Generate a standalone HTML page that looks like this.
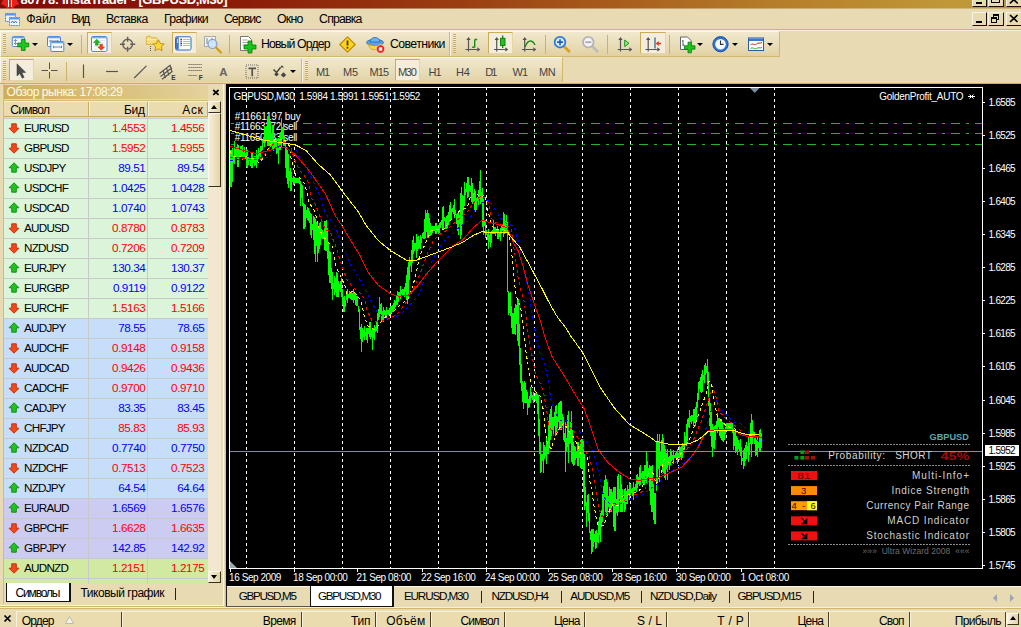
<!DOCTYPE html><html><head><meta charset="utf-8"><title>InstaTrader</title><style>*{box-sizing:border-box;margin:0;padding:0}
html,body{width:1021px;height:627px;overflow:hidden;background:#e8dab2;font-family:"Liberation Sans","DejaVu Sans",sans-serif;font-size:12px;color:#000}
.a{position:absolute}
.t{position:absolute;white-space:nowrap;line-height:14px}
#title{left:0;top:0;width:1021px;height:9px;background:linear-gradient(90deg,#830a04 0,#8a1606 20%,#9a3e12 45%,#a85c1c 60%,#b47a28 74%,#c09838 93%,#bc983a 100%);overflow:hidden}
.tb{position:absolute;background:linear-gradient(#f1e8cd,#e9ddb8 55%,#e1d0a2);border-bottom:1px solid #d3b86c;border-top:1px solid #fbf7ea;border-left:1px solid #fbf7ea}
.grip{position:absolute;width:3px;background:repeating-linear-gradient(#c9a84e 0,#c9a84e 1px,rgba(255,255,255,.35) 1px,rgba(255,255,255,.35) 2px)}
.sep{position:absolute;width:1px;background:#cdb06a}
.pressed{position:absolute;background:#f4eddb;border:1px solid #e6d5a4;border-top-color:#cbab58;border-left-color:#cbab58}
.dd{position:absolute;width:0;height:0;border-left:3px solid transparent;border-right:3px solid transparent;border-top:3px solid #000}
.row{position:absolute;left:4px;width:204px;height:20px;border-bottom:1px solid #c9c9c9}
.row i{position:absolute;left:84px;top:0;width:1px;height:19px;background:#c9c9c9}
.row i+i{left:143px}
</style></head><body>
<div id="title" class="a"><svg class="a" style="left:1px;top:0" width="18" height="9" viewBox="0 0 18 9"><path d="M2 0h14l2 4-4 2-3 3-2-2-2 2-3-3-4-2z" fill="#e8201a"/><path d="M7 0h1v7h-1zM10 0h1v7h-1z" fill="#fff"/></svg>
<span class="t" style="left:20.50px;top:-7.00px;font-size:13px;letter-spacing:-0.372px;color:#fff;font-weight:bold;">80778: InstaTrader - [GBPUSD,M30]</span>
<div class="a" style="left:0;top:8px;width:1021px;height:1px;background:rgba(236,225,194,.45)"></div>
<div class="a" style="left:972.0px;top:-8px;width:15.0px;height:15px;background:#e8dab2;border:1px solid #f8f3e2;border-right:1.500px solid #1a1408;border-bottom:1.500px solid #1a1408"></div>
<div class="a" style="left:987.5px;top:-8px;width:16.0px;height:15px;background:#e8dab2;border:1px solid #f8f3e2;border-right:1.500px solid #1a1408;border-bottom:1.500px solid #1a1408"></div>
<div class="a" style="left:1006.0px;top:-8px;width:16.0px;height:15px;background:#e8dab2;border:1px solid #f8f3e2;border-right:1.500px solid #1a1408;border-bottom:1.500px solid #1a1408"></div>
<div class="a" style="left:976px;top:2px;width:6px;height:2px;background:#000"></div>
<div class="a" style="left:991px;top:-5px;width:9px;height:8px;border:1px solid #000;border-top-width:2px"></div>
<svg class="a" style="left:1009px;top:0" width="10" height="5"><path d="M.800 -4l8 7.500M8.800 -4l-8 7.500" stroke="#000" stroke-width="1.700"/></svg>
</div>
<svg class="a" style="left:4px;top:12px" width="16" height="15" viewBox="0 0 16 15"><rect x="1.500" y="1.500" width="10" height="8" fill="#e8f2ff" stroke="#3a78d8" stroke-dasharray="1 .6"/><rect x="1.500" y="1.500" width="10" height="2" fill="#5a96ea"/><rect x="5.500" y="5.500" width="10" height="8" fill="#f4f9ff" stroke="#3a78d8" stroke-dasharray="1 .6"/><rect x="5.500" y="5.500" width="10" height="2" fill="#5a96ea"/><path d="M7 11l1.500-2 1.500 2 1.500-2 1.500 2" stroke="#2a62c8" fill="none" stroke-width=".9"/></svg>
<span class="t" style="left:26.20px;top:11.54px;font-size:12.3px;letter-spacing:-0.211px;">Файл</span>
<span class="t" style="left:71.20px;top:11.54px;font-size:12.3px;letter-spacing:-1.675px;">Вид</span>
<span class="t" style="left:105.90px;top:11.54px;font-size:12.3px;letter-spacing:-0.553px;">Вставка</span>
<span class="t" style="left:164.10px;top:11.54px;font-size:12.3px;letter-spacing:-0.715px;">Графики</span>
<span class="t" style="left:223.90px;top:11.54px;font-size:12.3px;letter-spacing:-0.902px;">Сервис</span>
<span class="t" style="left:277.10px;top:11.54px;font-size:12.3px;letter-spacing:-0.793px;">Окно</span>
<span class="t" style="left:319.10px;top:11.54px;font-size:12.3px;letter-spacing:-0.825px;">Справка</span>
<div class="a" style="left:972.0px;top:12px;width:15.0px;height:14px;background:#e8dab2;border:1px solid #f8f3e2;border-right:1.500px solid #1a1408;border-bottom:1.500px solid #1a1408"></div>
<div class="a" style="left:987.5px;top:12px;width:16.0px;height:14px;background:#e8dab2;border:1px solid #f8f3e2;border-right:1.500px solid #1a1408;border-bottom:1.500px solid #1a1408"></div>
<div class="a" style="left:1006.0px;top:12px;width:16.0px;height:14px;background:#e8dab2;border:1px solid #f8f3e2;border-right:1.500px solid #1a1408;border-bottom:1.500px solid #1a1408"></div>
<div class="a" style="left:976px;top:21px;width:6px;height:2px;background:#000"></div>
<div class="a" style="left:993px;top:14px;width:6px;height:6px;border:1px solid #000;border-top-width:2px"></div><div class="a" style="left:991px;top:17px;width:6px;height:6px;border:1px solid #000;border-top-width:2px;background:#e8dab2"></div>
<svg class="a" style="left:1009px;top:14px" width="10" height="9"><path d="M1 1l7.500 7M8.500 1l-7.500 7" stroke="#000" stroke-width="1.700"/></svg>
<div class="a" style="left:0;top:29px;width:1021px;height:1px;background:#d3b665"></div><div class="a" style="left:0;top:30px;width:1021px;height:1px;background:#f7f0dc"></div>
<div class="tb" style="left:0;top:31px;width:780px;height:26px;border-right:1px solid #d3b86c"></div>
<div class="tb" style="left:0;top:57px;width:563px;height:27px;border-right:1px solid #d3b86c"></div>
<div class="a" style="left:449px;top:32px;width:1px;height:24px;background:#d3b86c"></div><div class="a" style="left:450px;top:32px;width:1px;height:24px;background:#faf4e4"></div>
<div class="a" style="left:301px;top:59px;width:1px;height:24px;background:#d3b86c"></div><div class="a" style="left:302px;top:59px;width:1px;height:24px;background:#faf4e4"></div>
<div class="grip" style="left:3px;top:34px;height:19px"></div>
<div class="grip" style="left:453px;top:34px;height:19px"></div>
<div class="grip" style="left:3px;top:61px;height:19px"></div>
<div class="grip" style="left:305px;top:61px;height:19px"></div>
<div class="sep" style="left:81px;top:35px;height:19px"></div>
<div class="sep" style="left:229px;top:35px;height:19px"></div>
<div class="sep" style="left:545px;top:35px;height:19px"></div>
<div class="sep" style="left:607px;top:35px;height:19px"></div>
<div class="sep" style="left:669px;top:35px;height:19px"></div>
<div class="sep" style="left:66px;top:62px;height:19px"></div>
<div class="pressed" style="left:87px;top:32px;width:25px;height:22px"></div>
<div class="pressed" style="left:172px;top:32px;width:25px;height:22px"></div>
<div class="pressed" style="left:488px;top:32px;width:25px;height:22px"></div>
<div class="pressed" style="left:640px;top:32px;width:26px;height:22px"></div>
<div class="pressed" style="left:9px;top:59px;width:25px;height:22px"></div>
<div class="pressed" style="left:395px;top:59px;width:25px;height:22px"></div>
<div class="dd" style="left:32px;top:43px"></div>
<div class="dd" style="left:67px;top:43px"></div>
<div class="dd" style="left:697px;top:43px"></div>
<div class="dd" style="left:732px;top:43px"></div>
<div class="dd" style="left:767px;top:43px"></div>
<div class="dd" style="left:290px;top:70px"></div>
<svg class="a" style="left:8px;top:33px" width="60" height="22" viewBox="8 33 60 22"><rect x="12.3" y="36.5" width="12" height="10" rx="1" fill="#f6faff" stroke="#4a86d8" stroke-width="1"/><path d="M12.8 37.5h11" stroke="#6aa2ea" stroke-width="1.600"/><path d="M15.500 39.500v5M14 41l1.500-1.500 1.500 1.500M14 43l1.500 1.500 1.500-1.500" stroke="#5a7a9a" stroke-width=".8" fill="none"/><path d="M21.400 39.400h3.700v3.700h3.700v3.700h-3.700v3.700h-3.700v-3.700h-3.700v-3.700h3.700z" fill="#1fc81f" stroke="#0a7a0a" stroke-width=".8"/><rect x="47.5" y="36.5" width="13" height="10" rx="1" fill="#f6faff" stroke="#4a86d8" stroke-width="1"/><path d="M48.0 37.5h12" stroke="#6aa2ea" stroke-width="1.600"/><rect x="50.8" y="41.5" width="13" height="10" rx="1" fill="#f6faff" stroke="#4a86d8" stroke-width="1"/><path d="M51.3 42.5h12" stroke="#6aa2ea" stroke-width="1.600"/><path d="M50 41h8M50 39.800v2.400M58 39.800v2.400M53.500 47h8M53.500 45.800v2.400M61.500 45.800v2.400" stroke="#5a7a9a" stroke-width=".9" fill="none"/></svg>
<svg class="a" style="left:91px;top:36px" width="17" height="16" viewBox="0 0 17 16"><rect x=".5" y=".5" width="15.500" height="15" rx="1.500" fill="#fff" stroke="#4a8ad8"/><path d="M1 1.700h14.500" stroke="#7ab0ee" stroke-width="1.400"/><path d="M9 4.500h5M9 7h5M3 10.500h4M3 13h4" stroke="#d8e2ee" stroke-width=".8"/><path d="M5.800 3.200l3.400 3.400h-2v2.600h-2.800v-2.600h-2z" fill="#1cb81c" stroke="#0c8a0c" stroke-width=".5"/><path d="M10.200 14.300l3.400-3.400h-2v-2.600h-2.800v2.600h-2z" fill="#f0451c" stroke="#c02a08" stroke-width=".5"/></svg>
<svg class="a" style="left:118px;top:34px" width="20" height="20" viewBox="118 34 20 20"><circle cx="127.600" cy="44.200" r="4.900" fill="none" stroke="#606060" stroke-width="1.400"/><path d="M127.600 36.700v5M127.600 46.700v5M120 44.200h5M130.200 44.200h5" stroke="#606060" stroke-width="1.400"/></svg>
<svg class="a" style="left:144px;top:34px" width="22" height="20" viewBox="144 34 22 20"><path d="M146.300 37.300q0-1 1-1h3.200l1.200 1.500h4.300q1 0 1 1v5.700h-10.700z" fill="#f6dc7a" stroke="#d4aa3a" stroke-width=".8"/><path d="M146.800 39.500h9.700" stroke="#fbefb4" stroke-width="1"/><path d="M150.500 46v6" stroke="#555" stroke-width="1" stroke-dasharray="1 1" shape-rendering="crispEdges"/><path d="M158.500 39.800l1.750 3.700 4 .5-2.950 2.750.8 4-3.600-2-3.600 2 .8-4-2.950-2.750 4-.5z" fill="#ffd93a" stroke="#b98a10" stroke-width=".9" stroke-linejoin="round"/></svg>
<svg class="a" style="left:175px;top:36px" width="17" height="15" viewBox="0 0 17 15"><rect x=".5" y=".800" width="15.500" height="13.200" rx="1.500" fill="#fff" stroke="#2f66c0"/><rect x="1" y="1.300" width="2.800" height="12.200" fill="#3a78d8"/><path d="M2.600 3v4" stroke="#fff" stroke-width=".8"/><path d="M5.500 3.500h1.300M5.500 7.500h1.300" stroke="#111" stroke-width="1.300"/><path d="M5.500 5.500h1.300M5.500 9.500h1.300" stroke="#e01a1a" stroke-width="1.300"/><path d="M8 3.500h7M8 5.500h7M8 7.500h7M8 9.500h7" stroke="#9ab4e8" stroke-width=".9"/></svg>
<svg class="a" style="left:203px;top:35px" width="20" height="20" viewBox="0 0 20 20"><rect x="1.500" y="1.500" width="11" height="10" fill="#f3f3f3" stroke="#aaa"/><path d="M4 3v6M9 3v6" stroke="#567" stroke-width=".8"/><circle cx="9.500" cy="9" r="4.500" fill="#cfe4fb" fill-opacity=".85" stroke="#7a9cc8" stroke-width="1.200"/><path d="M13 12.500l5 5" stroke="#d89a1a" stroke-width="2.400" stroke-linecap="round"/></svg>
<svg class="a" style="left:239px;top:35px" width="18" height="19" viewBox="0 0 18 19"><path d="M1.500 1.500h8l3 3v11h-11z" fill="#fff" stroke="#777"/><path d="M3.500 5h5M3.500 7.500h6M3.500 10h6" stroke="#999" stroke-width=".9"/><path d="M9 6h4v4h4v4h-4v4h-4v-4h-4v-4h4z" fill="#19c419" stroke="#0a7a0a" stroke-width=".8"/></svg>
<span class="t" style="left:261.00px;top:36.74px;font-size:12.3px;letter-spacing:-0.886px;">Новый Ордер</span>
<svg class="a" style="left:339px;top:36px" width="17" height="17" viewBox="0 0 17 17"><path d="M8.500 .800l7.700 7.700-7.700 7.700-7.700-7.700z" fill="#ffd21c" stroke="#b88a08" stroke-width="1.100" stroke-linejoin="round"/><path d="M8.500 4.500v5" stroke="#4a3a00" stroke-width="1.800"/><rect x="7.600" y="10.800" width="1.800" height="1.800" fill="#4a3a00"/></svg>
<svg class="a" style="left:366px;top:35px" width="20" height="19" viewBox="0 0 20 19"><ellipse cx="9" cy="7.500" rx="8.500" ry="3.200" fill="#5aa0e2" stroke="#2a68b4" stroke-width=".8"/><path d="M4 7c0-6 10-6 10 0z" fill="#6cb0ee" stroke="#2a68b4" stroke-width=".8"/><path d="M2.500 9.500c1 7 11.500 7 13 0c-4 1.800-9 1.800-13 0z" fill="#ffd84a" stroke="#c79a1a" stroke-width=".8"/><circle cx="14.500" cy="14" r="4.300" fill="#e8261a" stroke="#fff" stroke-width=".6"/><rect x="12.800" y="12.300" width="3.400" height="3.400" fill="#fff"/></svg>
<span class="t" style="left:389.90px;top:36.74px;font-size:12.3px;letter-spacing:-0.562px;">Советники</span>
<svg class="a" style="left:460px;top:30px" width="320" height="27" viewBox="460 30 320 27"><path d="M468.5 38.5V51.5M465.5 49.5H478.5" stroke="#555" stroke-width="1.2" fill="none"/><path d="M468.5 37.0l-2.2 3h4.4zM480.3 49.5l-3-2.2v4.4z" fill="#555"/><path d="M474.7 39.5V47.2M472.2 47.2h2.5M474.7 39.5h2.500" stroke="#1a8a1a" stroke-width="1.4" fill="none"/><path d="M496.7 38.5V51.5M494 49.5H506.5" stroke="#555" stroke-width="1.2" fill="none"/><path d="M496.7 37.0l-2.2 3h4.4zM508.3 49.5l-3-2.2v4.4z" fill="#555"/><path d="M502.7 35.5V48" stroke="#0c6a0c" stroke-width="1.2"/><rect x="500.5" y="38.3" width="4.500" height="7.200" fill="#22c022" stroke="#0c7a0c" stroke-width=".9"/><path d="M524.7 38.5V51.5M522 49.5H534.5" stroke="#555" stroke-width="1.2" fill="none"/><path d="M524.7 37.0l-2.2 3h4.4zM536.3 49.5l-3-2.2v4.4z" fill="#555"/><path d="M525 47c1.500-4 3.500-6 5.500-6s3.500 2 4.500 4" stroke="#1a8a1a" stroke-width="1.300" fill="none"/><path d="M563.5 46l5.500 5.300" stroke="#d9a01e" stroke-width="2.800" stroke-linecap="round"/><circle cx="560" cy="42.200" r="5.300" fill="#dceeff" stroke="#2f7ad8" stroke-width="1.800"/><path d="M557 42.200h6M560 39.200v6" stroke="#1d5fc0" stroke-width="1.700"/><path d="M591.800 46l5.500 5.300" stroke="#bdbdbd" stroke-width="2.800" stroke-linecap="round"/><circle cx="588.300" cy="42.200" r="5.300" fill="#f2f2f2" stroke="#b4b4b4" stroke-width="1.800"/><path d="M585.300 42.200h6" stroke="#a8a8a8" stroke-width="1.700"/><path d="M620.5 38.5V51.5M617.7 49.5H630.5" stroke="#555" stroke-width="1.2" fill="none"/><path d="M620.5 37.0l-2.2 3h4.4zM632.3 49.5l-3-2.2v4.4z" fill="#555"/><path d="M624.700 40l4.300 3.300-4.300 3.300z" fill="#8ee88e" stroke="#1a9a1a" stroke-width="1"/><path d="M648.2 38.5V51.5M645.5 49.5H658.5" stroke="#555" stroke-width="1.2" fill="none"/><path d="M648.2 37.0l-2.2 3h4.4zM660.3 49.5l-3-2.2v4.4z" fill="#555"/><path d="M655 37.500V48.500" stroke="#2a6a9a" stroke-width="1.300"/><path d="M661 43.500h-4.500" stroke="#e8321a" stroke-width="1.300"/><path d="M655.800 43.500l3-2.500v5z" fill="#e8321a"/><path d="M680.500 37h7l3.500 3.500v9h-10.500z" fill="#fff" stroke="#666" stroke-width="1"/><path d="M683 40v6M682 41h1M683 45h1.500" stroke="#456" stroke-width=".9" fill="none"/><path d="M688 42.200h3.400v3.600h3.600v3.400h-3.600v3.600h-3.400v-3.600h-3.600v-3.400h3.600z" fill="#1fc41f" stroke="#0a7a0a" stroke-width=".8"/><circle cx="720.500" cy="44.200" r="7.600" fill="#2f74d4" stroke="#1a4e9e" stroke-width="1"/><circle cx="720.500" cy="44.200" r="5.300" fill="#f4f8ff"/><path d="M720.500 40.500v3.900h3" stroke="#333" stroke-width="1.100" fill="none"/><rect x="748.500" y="38" width="15" height="12.500" fill="#fff" stroke="#2a5aa8"/><rect x="749" y="38.500" width="14" height="2.500" fill="#3a78d8"/><path d="M750.500 45c2.500-2.500 4 1 6-1s3 0 5.500-1.500" stroke="#c22" fill="none"/><path d="M750.500 48.500c2.500-2 4 1.500 6 0s3 0 5.500-1" stroke="#2a2" fill="none"/></svg>
<svg class="a" style="left:0;top:58px" width="300" height="26" viewBox="0 58 300 26"><path d="M17 63.800v12.200l2.900-2.600 2.300 4.800 1.900-.9-2.300-4.700 3.900-.2z" fill="#4a4a4a" stroke="#333" stroke-width=".5"/><path d="M49.500 62.500v6.500M49.500 72v6.500M41.500 70.500h6.500M51 70.500h6.500" stroke="#555" stroke-width="1"/><path d="M83.500 64.500V78" stroke="#555" stroke-width="1.200"/><path d="M106 71.500H118" stroke="#555" stroke-width="1.200"/><path d="M134.200 78L146.400 65.800" stroke="#555" stroke-width="1.200"/><path d="M159.500 73.500l11-8.500M160.500 76.500l11.500-8.800M162 79.300l10.500-8M163 70.500l2.500 7.500M166.500 67.800l2.500 7.500M170 65l2 7" stroke="#505050" stroke-width="1.100" fill="none"/><text x="171.200" y="79.600" font-size="6.500" font-weight="bold" fill="#333" font-family="Liberation Sans,sans-serif">E</text><path d="M188.600 64.500H202M188.600 67.500H202M188.600 70.500H202M188.600 75.500H197" stroke="#444" stroke-width="1.200" stroke-dasharray="1 1"/><text x="198.800" y="79.600" font-size="6.500" font-weight="bold" fill="#333" font-family="Liberation Sans,sans-serif">F</text><text x="219.300" y="75.600" font-size="11.500" font-weight="bold" fill="#666" font-family="Liberation Sans,sans-serif">A</text><rect x="246" y="65" width="12" height="13" fill="none" stroke="#666" stroke-dasharray="1 1"/><path d="M248.500 68.300h7.500M252.200 68.300v8" stroke="#555" stroke-width="1.700"/><path d="M273.500 69.500l3 3 4-5" stroke="#444" stroke-width="1.500" fill="none"/><path d="M276.500 72l2.300 2.300-2.300 2.300-2.300-2.300zM283.500 72.200l2.700 2.700-2.700 2.700-2.700-2.700z" fill="#444"/><path d="M280 67.500l2-2.200 2 2.200z" fill="#444"/></svg>
<span class="t" style="left:315.90px;top:64.69px;font-size:11px;letter-spacing:-1.081px;color:#444;">M1</span>
<span class="t" style="left:343.10px;top:64.69px;font-size:11px;letter-spacing:-0.181px;color:#444;">M5</span>
<span class="t" style="left:369.50px;top:64.69px;font-size:11px;letter-spacing:-0.903px;color:#444;">M15</span>
<span class="t" style="left:397.90px;top:64.69px;font-size:11px;letter-spacing:-1.203px;color:#444;">M30</span>
<span class="t" style="left:428.50px;top:64.69px;font-size:11px;letter-spacing:-1.062px;color:#444;">H1</span>
<span class="t" style="left:456.10px;top:64.69px;font-size:11px;letter-spacing:-0.363px;color:#444;">H4</span>
<span class="t" style="left:485.20px;top:64.69px;font-size:11px;letter-spacing:-1.762px;color:#444;">D1</span>
<span class="t" style="left:512.50px;top:64.69px;font-size:11px;letter-spacing:-1.000px;color:#444;">W1</span>
<span class="t" style="left:538.90px;top:64.69px;font-size:11px;letter-spacing:-0.309px;color:#444;">MN</span>
<div class="a" style="left:0;top:83px;width:226px;height:1px;background:#d8c080"></div>
<div class="a" style="left:3px;top:84px;width:1px;height:520px;background:#d6bb72"></div>
<div class="a" style="left:4px;top:85px;width:204px;height:14px;background:linear-gradient(90deg,#ceae5c,#dbc483 65%,#e4d29e)"></div>
<span class="t" style="left:6.50px;top:84.84px;font-size:12px;letter-spacing:-0.449px;color:#fffbe8;">Обзор рынка: 17:08:29</span>
<svg class="a" style="left:212px;top:89px" width="8" height="7"><path d="M1.200 1l5.400 4.800M6.600 1l-5.400 4.800" stroke="#000" stroke-width="1.700"/></svg>
<div class="a" style="left:4px;top:100px;width:204px;height:17px;background:#eadcaf;border-top:1px solid #d6bb72;border-bottom:1px solid #c9ab5e"></div>
<div class="a" style="left:4px;top:101px;width:204px;height:1px;background:#f6efd8"></div>
<div class="a" style="left:88px;top:102px;width:1px;height:14px;background:#c9ab5e"></div><div class="a" style="left:89px;top:102px;width:1px;height:14px;background:#f8f2dc"></div>
<div class="a" style="left:147px;top:102px;width:1px;height:14px;background:#c9ab5e"></div><div class="a" style="left:148px;top:102px;width:1px;height:14px;background:#f8f2dc"></div>
<div class="a" style="left:207px;top:102px;width:1px;height:14px;background:#c9ab5e"></div><div class="a" style="left:208px;top:102px;width:1px;height:14px;background:#f8f2dc"></div>
<span class="t" style="left:10.30px;top:102.84px;font-size:12px;letter-spacing:-0.736px;">Символ</span>
<span class="t" style="right:876.40px;top:102.84px;font-size:12px;letter-spacing:-0.297px;">Бид</span>
<span class="t" style="right:817.58px;top:102.84px;font-size:12px;letter-spacing:0.617px;">Аск</span>
<div class="a" style="left:4px;top:118px;width:204px;height:1px;background:#c9c9c9"></div>
<div class="a" style="left:0;top:118px;width:208px;height:466px;overflow:hidden"><div class="a" style="left:0;top:-118px;width:1021px;height:627px">
<div class="row" style="top:119px;background:#dcf4da"><svg class="a" style="left:4px;top:3px" width="12" height="12" viewBox="0 0 12 12"><path d="M6 11.200l5-5h-2.700v-4.400h-4.600v4.400h-2.700z" fill="#f04a1c" stroke="#c02a08" stroke-width=".9" stroke-linejoin="round"/></svg><i></i><i></i></div>
<span class="t" style="left:24.10px;top:120.55px;font-size:11.7px;letter-spacing:-0.792px;">EURUSD</span>
<span class="t" style="right:875.73px;top:120.55px;font-size:11.7px;letter-spacing:-0.430px;color:#ff0000;">1.4553</span>
<span class="t" style="right:816.73px;top:120.55px;font-size:11.7px;letter-spacing:-0.430px;color:#ff0000;">1.4556</span>
<div class="row" style="top:139px;background:#dcf4da"><svg class="a" style="left:4px;top:3px" width="12" height="12" viewBox="0 0 12 12"><path d="M6 11.200l5-5h-2.700v-4.400h-4.600v4.400h-2.700z" fill="#f04a1c" stroke="#c02a08" stroke-width=".9" stroke-linejoin="round"/></svg><i></i><i></i></div>
<span class="t" style="left:24.10px;top:140.55px;font-size:11.7px;letter-spacing:-0.792px;">GBPUSD</span>
<span class="t" style="right:875.73px;top:140.55px;font-size:11.7px;letter-spacing:-0.430px;color:#ff0000;">1.5952</span>
<span class="t" style="right:816.73px;top:140.55px;font-size:11.7px;letter-spacing:-0.430px;color:#ff0000;">1.5955</span>
<div class="row" style="top:159px;background:#dcf4da"><svg class="a" style="left:4px;top:3px" width="12" height="12" viewBox="0 0 12 12"><path d="M6 .8l5 5h-2.700v4.400h-4.600v-4.400h-2.700z" fill="#22c022" stroke="#0c8a0c" stroke-width=".9" stroke-linejoin="round"/></svg><i></i><i></i></div>
<span class="t" style="left:24.10px;top:160.55px;font-size:11.7px;letter-spacing:-0.792px;">USDJPY</span>
<span class="t" style="right:875.73px;top:160.55px;font-size:11.7px;letter-spacing:-0.430px;color:#0000ff;">89.51</span>
<span class="t" style="right:816.73px;top:160.55px;font-size:11.7px;letter-spacing:-0.430px;color:#0000ff;">89.54</span>
<div class="row" style="top:179px;background:#dcf4da"><svg class="a" style="left:4px;top:3px" width="12" height="12" viewBox="0 0 12 12"><path d="M6 .8l5 5h-2.700v4.400h-4.600v-4.400h-2.700z" fill="#22c022" stroke="#0c8a0c" stroke-width=".9" stroke-linejoin="round"/></svg><i></i><i></i></div>
<span class="t" style="left:24.10px;top:180.55px;font-size:11.7px;letter-spacing:-0.792px;">USDCHF</span>
<span class="t" style="right:875.73px;top:180.55px;font-size:11.7px;letter-spacing:-0.430px;color:#0000ff;">1.0425</span>
<span class="t" style="right:816.73px;top:180.55px;font-size:11.7px;letter-spacing:-0.430px;color:#0000ff;">1.0428</span>
<div class="row" style="top:199px;background:#dcf4da"><svg class="a" style="left:4px;top:3px" width="12" height="12" viewBox="0 0 12 12"><path d="M6 .8l5 5h-2.700v4.400h-4.600v-4.400h-2.700z" fill="#22c022" stroke="#0c8a0c" stroke-width=".9" stroke-linejoin="round"/></svg><i></i><i></i></div>
<span class="t" style="left:24.10px;top:200.55px;font-size:11.7px;letter-spacing:-0.792px;">USDCAD</span>
<span class="t" style="right:875.73px;top:200.55px;font-size:11.7px;letter-spacing:-0.430px;color:#0000ff;">1.0740</span>
<span class="t" style="right:816.73px;top:200.55px;font-size:11.7px;letter-spacing:-0.430px;color:#0000ff;">1.0743</span>
<div class="row" style="top:219px;background:#dcf4da"><svg class="a" style="left:4px;top:3px" width="12" height="12" viewBox="0 0 12 12"><path d="M6 11.200l5-5h-2.700v-4.400h-4.600v4.400h-2.700z" fill="#f04a1c" stroke="#c02a08" stroke-width=".9" stroke-linejoin="round"/></svg><i></i><i></i></div>
<span class="t" style="left:24.10px;top:220.55px;font-size:11.7px;letter-spacing:-0.792px;">AUDUSD</span>
<span class="t" style="right:875.73px;top:220.55px;font-size:11.7px;letter-spacing:-0.430px;color:#ff0000;">0.8780</span>
<span class="t" style="right:816.73px;top:220.55px;font-size:11.7px;letter-spacing:-0.430px;color:#ff0000;">0.8783</span>
<div class="row" style="top:239px;background:#dcf4da"><svg class="a" style="left:4px;top:3px" width="12" height="12" viewBox="0 0 12 12"><path d="M6 11.200l5-5h-2.700v-4.400h-4.600v4.400h-2.700z" fill="#f04a1c" stroke="#c02a08" stroke-width=".9" stroke-linejoin="round"/></svg><i></i><i></i></div>
<span class="t" style="left:24.10px;top:240.55px;font-size:11.7px;letter-spacing:-0.792px;">NZDUSD</span>
<span class="t" style="right:875.73px;top:240.55px;font-size:11.7px;letter-spacing:-0.430px;color:#ff0000;">0.7206</span>
<span class="t" style="right:816.73px;top:240.55px;font-size:11.7px;letter-spacing:-0.430px;color:#ff0000;">0.7209</span>
<div class="row" style="top:259px;background:#dcf4da"><svg class="a" style="left:4px;top:3px" width="12" height="12" viewBox="0 0 12 12"><path d="M6 .8l5 5h-2.700v4.400h-4.600v-4.400h-2.700z" fill="#22c022" stroke="#0c8a0c" stroke-width=".9" stroke-linejoin="round"/></svg><i></i><i></i></div>
<span class="t" style="left:24.10px;top:260.55px;font-size:11.7px;letter-spacing:-0.792px;">EURJPY</span>
<span class="t" style="right:875.73px;top:260.55px;font-size:11.7px;letter-spacing:-0.430px;color:#0000ff;">130.34</span>
<span class="t" style="right:816.73px;top:260.55px;font-size:11.7px;letter-spacing:-0.430px;color:#0000ff;">130.37</span>
<div class="row" style="top:279px;background:#dcf4da"><svg class="a" style="left:4px;top:3px" width="12" height="12" viewBox="0 0 12 12"><path d="M6 .8l5 5h-2.700v4.400h-4.600v-4.400h-2.700z" fill="#22c022" stroke="#0c8a0c" stroke-width=".9" stroke-linejoin="round"/></svg><i></i><i></i></div>
<span class="t" style="left:24.10px;top:280.55px;font-size:11.7px;letter-spacing:-0.792px;">EURGBP</span>
<span class="t" style="right:875.73px;top:280.55px;font-size:11.7px;letter-spacing:-0.430px;color:#0000ff;">0.9119</span>
<span class="t" style="right:816.73px;top:280.55px;font-size:11.7px;letter-spacing:-0.430px;color:#0000ff;">0.9122</span>
<div class="row" style="top:299px;background:#dcf4da"><svg class="a" style="left:4px;top:3px" width="12" height="12" viewBox="0 0 12 12"><path d="M6 11.200l5-5h-2.700v-4.400h-4.600v4.400h-2.700z" fill="#f04a1c" stroke="#c02a08" stroke-width=".9" stroke-linejoin="round"/></svg><i></i><i></i></div>
<span class="t" style="left:24.10px;top:300.55px;font-size:11.7px;letter-spacing:-0.792px;">EURCHF</span>
<span class="t" style="right:875.73px;top:300.55px;font-size:11.7px;letter-spacing:-0.430px;color:#ff0000;">1.5163</span>
<span class="t" style="right:816.73px;top:300.55px;font-size:11.7px;letter-spacing:-0.430px;color:#ff0000;">1.5166</span>
<div class="row" style="top:319px;background:#c6defa"><svg class="a" style="left:4px;top:3px" width="12" height="12" viewBox="0 0 12 12"><path d="M6 .8l5 5h-2.700v4.400h-4.600v-4.400h-2.700z" fill="#22c022" stroke="#0c8a0c" stroke-width=".9" stroke-linejoin="round"/></svg><i></i><i></i></div>
<span class="t" style="left:24.10px;top:320.55px;font-size:11.7px;letter-spacing:-0.792px;">AUDJPY</span>
<span class="t" style="right:875.73px;top:320.55px;font-size:11.7px;letter-spacing:-0.430px;color:#0000ff;">78.55</span>
<span class="t" style="right:816.73px;top:320.55px;font-size:11.7px;letter-spacing:-0.430px;color:#0000ff;">78.65</span>
<div class="row" style="top:339px;background:#c6defa"><svg class="a" style="left:4px;top:3px" width="12" height="12" viewBox="0 0 12 12"><path d="M6 11.200l5-5h-2.700v-4.400h-4.600v4.400h-2.700z" fill="#f04a1c" stroke="#c02a08" stroke-width=".9" stroke-linejoin="round"/></svg><i></i><i></i></div>
<span class="t" style="left:24.10px;top:340.55px;font-size:11.7px;letter-spacing:-0.792px;">AUDCHF</span>
<span class="t" style="right:875.73px;top:340.55px;font-size:11.7px;letter-spacing:-0.430px;color:#ff0000;">0.9148</span>
<span class="t" style="right:816.73px;top:340.55px;font-size:11.7px;letter-spacing:-0.430px;color:#ff0000;">0.9158</span>
<div class="row" style="top:359px;background:#c6defa"><svg class="a" style="left:4px;top:3px" width="12" height="12" viewBox="0 0 12 12"><path d="M6 11.200l5-5h-2.700v-4.400h-4.600v4.400h-2.700z" fill="#f04a1c" stroke="#c02a08" stroke-width=".9" stroke-linejoin="round"/></svg><i></i><i></i></div>
<span class="t" style="left:24.10px;top:360.55px;font-size:11.7px;letter-spacing:-0.792px;">AUDCAD</span>
<span class="t" style="right:875.73px;top:360.55px;font-size:11.7px;letter-spacing:-0.430px;color:#ff0000;">0.9426</span>
<span class="t" style="right:816.73px;top:360.55px;font-size:11.7px;letter-spacing:-0.430px;color:#ff0000;">0.9436</span>
<div class="row" style="top:379px;background:#c6defa"><svg class="a" style="left:4px;top:3px" width="12" height="12" viewBox="0 0 12 12"><path d="M6 11.200l5-5h-2.700v-4.400h-4.600v4.400h-2.700z" fill="#f04a1c" stroke="#c02a08" stroke-width=".9" stroke-linejoin="round"/></svg><i></i><i></i></div>
<span class="t" style="left:24.10px;top:380.55px;font-size:11.7px;letter-spacing:-0.792px;">CADCHF</span>
<span class="t" style="right:875.73px;top:380.55px;font-size:11.7px;letter-spacing:-0.430px;color:#ff0000;">0.9700</span>
<span class="t" style="right:816.73px;top:380.55px;font-size:11.7px;letter-spacing:-0.430px;color:#ff0000;">0.9710</span>
<div class="row" style="top:399px;background:#c6defa"><svg class="a" style="left:4px;top:3px" width="12" height="12" viewBox="0 0 12 12"><path d="M6 .8l5 5h-2.700v4.400h-4.600v-4.400h-2.700z" fill="#22c022" stroke="#0c8a0c" stroke-width=".9" stroke-linejoin="round"/></svg><i></i><i></i></div>
<span class="t" style="left:24.10px;top:400.55px;font-size:11.7px;letter-spacing:-0.792px;">CADJPY</span>
<span class="t" style="right:875.73px;top:400.55px;font-size:11.7px;letter-spacing:-0.430px;color:#0000ff;">83.35</span>
<span class="t" style="right:816.73px;top:400.55px;font-size:11.7px;letter-spacing:-0.430px;color:#0000ff;">83.45</span>
<div class="row" style="top:419px;background:#c6defa"><svg class="a" style="left:4px;top:3px" width="12" height="12" viewBox="0 0 12 12"><path d="M6 11.200l5-5h-2.700v-4.400h-4.600v4.400h-2.700z" fill="#f04a1c" stroke="#c02a08" stroke-width=".9" stroke-linejoin="round"/></svg><i></i><i></i></div>
<span class="t" style="left:24.10px;top:420.55px;font-size:11.7px;letter-spacing:-0.792px;">CHFJPY</span>
<span class="t" style="right:875.73px;top:420.55px;font-size:11.7px;letter-spacing:-0.430px;color:#ff0000;">85.83</span>
<span class="t" style="right:816.73px;top:420.55px;font-size:11.7px;letter-spacing:-0.430px;color:#ff0000;">85.93</span>
<div class="row" style="top:439px;background:#c6defa"><svg class="a" style="left:4px;top:3px" width="12" height="12" viewBox="0 0 12 12"><path d="M6 .8l5 5h-2.700v4.400h-4.600v-4.400h-2.700z" fill="#22c022" stroke="#0c8a0c" stroke-width=".9" stroke-linejoin="round"/></svg><i></i><i></i></div>
<span class="t" style="left:24.10px;top:440.55px;font-size:11.7px;letter-spacing:-0.792px;">NZDCAD</span>
<span class="t" style="right:875.73px;top:440.55px;font-size:11.7px;letter-spacing:-0.430px;color:#0000ff;">0.7740</span>
<span class="t" style="right:816.73px;top:440.55px;font-size:11.7px;letter-spacing:-0.430px;color:#0000ff;">0.7750</span>
<div class="row" style="top:459px;background:#c6defa"><svg class="a" style="left:4px;top:3px" width="12" height="12" viewBox="0 0 12 12"><path d="M6 11.200l5-5h-2.700v-4.400h-4.600v4.400h-2.700z" fill="#f04a1c" stroke="#c02a08" stroke-width=".9" stroke-linejoin="round"/></svg><i></i><i></i></div>
<span class="t" style="left:24.10px;top:460.55px;font-size:11.7px;letter-spacing:-0.792px;">NZDCHF</span>
<span class="t" style="right:875.73px;top:460.55px;font-size:11.7px;letter-spacing:-0.430px;color:#ff0000;">0.7513</span>
<span class="t" style="right:816.73px;top:460.55px;font-size:11.7px;letter-spacing:-0.430px;color:#ff0000;">0.7523</span>
<div class="row" style="top:479px;background:#c6defa"><svg class="a" style="left:4px;top:3px" width="12" height="12" viewBox="0 0 12 12"><path d="M6 .8l5 5h-2.700v4.400h-4.600v-4.400h-2.700z" fill="#22c022" stroke="#0c8a0c" stroke-width=".9" stroke-linejoin="round"/></svg><i></i><i></i></div>
<span class="t" style="left:24.10px;top:480.55px;font-size:11.7px;letter-spacing:-0.792px;">NZDJPY</span>
<span class="t" style="right:875.73px;top:480.55px;font-size:11.7px;letter-spacing:-0.430px;color:#0000ff;">64.54</span>
<span class="t" style="right:816.73px;top:480.55px;font-size:11.7px;letter-spacing:-0.430px;color:#0000ff;">64.64</span>
<div class="row" style="top:499px;background:#ccccf2"><svg class="a" style="left:4px;top:3px" width="12" height="12" viewBox="0 0 12 12"><path d="M6 .8l5 5h-2.700v4.400h-4.600v-4.400h-2.700z" fill="#22c022" stroke="#0c8a0c" stroke-width=".9" stroke-linejoin="round"/></svg><i></i><i></i></div>
<span class="t" style="left:24.10px;top:500.55px;font-size:11.7px;letter-spacing:-0.792px;">EURAUD</span>
<span class="t" style="right:875.73px;top:500.55px;font-size:11.7px;letter-spacing:-0.430px;color:#0000ff;">1.6569</span>
<span class="t" style="right:816.73px;top:500.55px;font-size:11.7px;letter-spacing:-0.430px;color:#0000ff;">1.6576</span>
<div class="row" style="top:519px;background:#ccccf2"><svg class="a" style="left:4px;top:3px" width="12" height="12" viewBox="0 0 12 12"><path d="M6 11.200l5-5h-2.700v-4.400h-4.600v4.400h-2.700z" fill="#f04a1c" stroke="#c02a08" stroke-width=".9" stroke-linejoin="round"/></svg><i></i><i></i></div>
<span class="t" style="left:24.10px;top:520.55px;font-size:11.7px;letter-spacing:-0.792px;">GBPCHF</span>
<span class="t" style="right:875.73px;top:520.55px;font-size:11.7px;letter-spacing:-0.430px;color:#ff0000;">1.6628</span>
<span class="t" style="right:816.73px;top:520.55px;font-size:11.7px;letter-spacing:-0.430px;color:#ff0000;">1.6635</span>
<div class="row" style="top:539px;background:#ccccf2"><svg class="a" style="left:4px;top:3px" width="12" height="12" viewBox="0 0 12 12"><path d="M6 .8l5 5h-2.700v4.400h-4.600v-4.400h-2.700z" fill="#22c022" stroke="#0c8a0c" stroke-width=".9" stroke-linejoin="round"/></svg><i></i><i></i></div>
<span class="t" style="left:24.10px;top:540.55px;font-size:11.7px;letter-spacing:-0.792px;">GBPJPY</span>
<span class="t" style="right:875.73px;top:540.55px;font-size:11.7px;letter-spacing:-0.430px;color:#0000ff;">142.85</span>
<span class="t" style="right:816.73px;top:540.55px;font-size:11.7px;letter-spacing:-0.430px;color:#0000ff;">142.92</span>
<div class="row" style="top:559px;background:#d2e9a2"><svg class="a" style="left:4px;top:3px" width="12" height="12" viewBox="0 0 12 12"><path d="M6 11.200l5-5h-2.700v-4.400h-4.600v4.400h-2.700z" fill="#f04a1c" stroke="#c02a08" stroke-width=".9" stroke-linejoin="round"/></svg><i></i><i></i></div>
<span class="t" style="left:24.10px;top:560.55px;font-size:11.7px;letter-spacing:-0.792px;">AUDNZD</span>
<span class="t" style="right:875.73px;top:560.55px;font-size:11.7px;letter-spacing:-0.430px;color:#ff0000;">1.2151</span>
<span class="t" style="right:816.73px;top:560.55px;font-size:11.7px;letter-spacing:-0.430px;color:#ff0000;">1.2175</span>
<div class="row" style="top:579px;background:#d2e9a2"><svg class="a" style="left:4px;top:3px" width="12" height="12" viewBox="0 0 12 12"><path d="M6 11.200l5-5h-2.700v-4.400h-4.600v4.400h-2.700z" fill="#f04a1c" stroke="#c02a08" stroke-width=".9" stroke-linejoin="round"/></svg><i></i><i></i></div>
<span class="t" style="left:24.10px;top:580.55px;font-size:11.7px;letter-spacing:-0.792px;">EURCAD</span>
<span class="t" style="right:875.73px;top:580.55px;font-size:11.7px;letter-spacing:-0.430px;color:#ff0000;">1.5630</span>
<span class="t" style="right:816.73px;top:580.55px;font-size:11.7px;letter-spacing:-0.430px;color:#ff0000;">1.5640</span>
</div></div>
<div class="a" style="left:208px;top:101px;width:13px;height:482px;background:#f1e8cf"></div>
<div class="a" style="left:208px;top:101px;width:13px;height:12px;background:linear-gradient(90deg,#f6efdb,#e4d3a4);border:1px solid #fbf7ea;border-right-color:#3a3220;border-bottom-color:#3a3220"></div>
<div class="a" style="left:211px;top:105px;width:0;height:0;border-left:3.5px solid transparent;border-right:3.5px solid transparent;border-bottom:4px solid #000"></div>
<div class="a" style="left:208px;top:113px;width:13px;height:74px;background:linear-gradient(90deg,#f6efdb,#e4d3a4);border:1px solid #fbf7ea;border-right-color:#3a3220;border-bottom-color:#3a3220"></div>
<div class="a" style="left:208px;top:571px;width:13px;height:12px;background:linear-gradient(90deg,#f6efdb,#e4d3a4);border:1px solid #fbf7ea;border-right-color:#3a3220;border-bottom-color:#3a3220"></div>
<div class="a" style="left:211px;top:575px;width:0;height:0;border-left:3.5px solid transparent;border-right:3.5px solid transparent;border-top:4px solid #000"></div>
<div class="a" style="left:6px;top:583px;width:65px;height:19px;background:#fff;border:1px solid #111;border-top:0;border-right-width:2px"></div>
<span class="t" style="left:15.50px;top:585.64px;font-size:12px;letter-spacing:-1.151px;">Символы</span>
<span class="t" style="left:80.50px;top:585.64px;font-size:12px;letter-spacing:-0.474px;">Тиковый график</span>
<div class="a" style="left:175px;top:588px;width:1px;height:12px;background:#222"></div>
<svg class="a" style="left:226px;top:84px" width="795" height="502" viewBox="226 84 795 502" font-family="Liberation Sans,DejaVu Sans,sans-serif">
<rect x="226" y="84" width="795" height="502" fill="#000"/>
<path d="M246.5 87V568" stroke="#fff" stroke-width="1" stroke-dasharray="3 3" shape-rendering="crispEdges"/>
<path d="M294.5 87V568" stroke="#fff" stroke-width="1" stroke-dasharray="3 3" shape-rendering="crispEdges"/>
<path d="M342.5 87V568" stroke="#fff" stroke-width="1" stroke-dasharray="3 3" shape-rendering="crispEdges"/>
<path d="M390.5 87V568" stroke="#fff" stroke-width="1" stroke-dasharray="3 3" shape-rendering="crispEdges"/>
<path d="M438.5 87V568" stroke="#fff" stroke-width="1" stroke-dasharray="3 3" shape-rendering="crispEdges"/>
<path d="M486.5 87V568" stroke="#fff" stroke-width="1" stroke-dasharray="3 3" shape-rendering="crispEdges"/>
<path d="M534.5 87V568" stroke="#fff" stroke-width="1" stroke-dasharray="3 3" shape-rendering="crispEdges"/>
<path d="M582.5 87V568" stroke="#fff" stroke-width="1" stroke-dasharray="3 3" shape-rendering="crispEdges"/>
<path d="M630.5 87V568" stroke="#fff" stroke-width="1" stroke-dasharray="3 3" shape-rendering="crispEdges"/>
<path d="M678.5 87V568" stroke="#fff" stroke-width="1" stroke-dasharray="3 3" shape-rendering="crispEdges"/>
<path d="M726.5 87V568" stroke="#fff" stroke-width="1" stroke-dasharray="3 3" shape-rendering="crispEdges"/>
<path d="M774.5 87V568" stroke="#fff" stroke-width="1" stroke-dasharray="3 3" shape-rendering="crispEdges"/>
<path d="M231 123.5H982" stroke="#22b422" stroke-width="1" stroke-dasharray="9 6 3 6" shape-rendering="crispEdges"/>
<path d="M231 133.5H982" stroke="#22b422" stroke-width="1" stroke-dasharray="9 6 3 6" shape-rendering="crispEdges"/>
<path d="M231 144.5H982" stroke="#22b422" stroke-width="1" stroke-dasharray="9 6 3 6" shape-rendering="crispEdges"/>
<rect x="234" y="111" width="67.500" height="14" fill="#000"/><rect x="234" y="124" width="64" height="21.500" fill="#000"/>
<text x="234.8" y="120.0" font-size="10" fill="#fff" textLength="65.9" lengthAdjust="spacing">#11661197 buy</text>
<text x="234.8" y="130.4" font-size="10" fill="#fff" textLength="62.5" lengthAdjust="spacing">#11663272 sell</text>
<text x="234.8" y="141.4" font-size="10" fill="#fff" textLength="62.5" lengthAdjust="spacing">#11650783 sell</text>
<path d="M230.5 150.0V187.0M231.5 150.0V187.0M232.5 148.2V182.4M233.5 155.5V163.4M234.5 141.0V164.0M235.5 148.7V156.3M236.5 147.1V157.9M237.5 144.4V167.4M238.5 145.0V167.1M239.5 150.4V157.3M240.5 145.6V156.8M241.5 146.2V157.2M242.5 145.0V160.3M243.5 152.1V159.2M244.5 147.4V157.0M245.5 152.8V158.6M246.5 149.4V167.1M247.5 150.2V168.0M248.5 157.2V165.3M249.5 157.6V161.2M250.5 157.6V165.8M251.5 151.8V168.0M252.5 151.8V168.0M253.5 157.7V163.1M254.5 156.2V166.3M255.5 156.2V165.1M256.5 149.9V167.8M257.5 154.8V161.2M258.5 148.2V158.5M259.5 151.0V156.0M260.5 146.0V160.0M261.5 146.0V151.2M262.5 139.6V149.8M263.5 137.3V142.7M264.5 126.0V146.7M265.5 126.6V142.9M266.5 125.8V140.7M267.5 115.7V146.0M268.5 115.5V146.0M269.5 118.5V146.0M270.5 121.0V146.7M271.5 132.8V146.0M272.5 125.0V149.3M273.5 127.2V151.3M274.5 138.6V148.1M275.5 139.5V147.1M276.5 138.2V154.4M277.5 146.5V153.4M278.5 138.3V163.5M279.5 138.8V150.4M280.5 131.6V150.2M281.5 118.0V147.6M282.5 127.4V139.0M283.5 122.5V146.0M284.5 136.7V146.2M285.5 140.8V168.1M286.5 147.2V178.0M287.5 149.8V184.0M288.5 154.3V187.8M289.5 171.2V180.6M290.5 167.7V191.2M291.5 172.0V190.7M292.5 177.6V182.4M293.5 176.0V185.3M294.5 177.0V184.0M295.5 178.1V182.9M296.5 178.1V182.9M297.5 178.1V182.9M298.5 178.1V182.9M299.5 177.0V184.0M300.5 181.2V206.0M301.5 184.1V197.7M302.5 184.7V206.0M303.5 203.0V229.0M304.5 204.3V229.0M305.5 205.3V227.2M306.5 209.8V218.0M307.5 206.7V219.8M308.5 208.2V221.3M309.5 211.4V222.7M310.5 212.8V234.7M311.5 214.4V238.4M312.5 224.4V229.5M313.5 215.9V239.9M314.5 217.2V253.5M315.5 218.7V262.0M316.5 222.1V245.5M317.5 221.4V262.0M318.5 226.8V252.8M319.5 223.1V249.4M320.5 222.0V245.1M321.5 229.1V238.4M322.5 230.1V238.8M323.5 232.3V238.7M324.5 221.1V250.3M325.5 220.8V251.0M326.5 220.2V251.0M327.5 227.8V259.0M328.5 243.2V275.0M329.5 251.3V283.0M330.5 251.9V283.0M331.5 268.3V289.3M332.5 272.0V299.6M333.5 282.5V289.0M334.5 275.6V294.9M335.5 278.2V292.0M336.5 272.0V297.1M337.5 272.6V296.8M338.5 281.1V296.8M339.5 283.7V289.6M340.5 280.5V291.5M341.5 277.6V296.8M342.5 289.0V305.4M343.5 296.6V311.5M344.5 296.1V311.5M345.5 299.9V307.4M346.5 291.8V300.3M347.5 289.0V303.3M348.5 294.1V297.6M349.5 291.4V297.5M350.5 292.2V298.5M351.5 291.6V299.8M352.5 292.8V299.5M353.5 288.5V302.7M354.5 293.2V299.9M355.5 294.1V305.3M356.5 295.6V306.0M357.5 295.6V306.0M358.5 306.2V312.1M359.5 308.6V329.8M360.5 326.6V338.6M361.5 324.1V351.8M362.5 328.3V342.1M363.5 330.2V336.5M364.5 326.3V339.5M365.5 331.9V336.0M366.5 328.2V339.7M367.5 327.8V343.1M368.5 328.2V334.3M369.5 321.6V337.2M370.5 321.7V338.6M371.5 329.8V337.2M372.5 328.7V350.0M373.5 328.3V337.9M374.5 324.6V340.4M375.5 327.4V331.5M376.5 321.2V330.6M377.5 313.2V333.2M378.5 308.6V320.1M379.5 296.8V316.5M380.5 304.0V314.0M381.5 303.1V320.5M382.5 310.6V319.6M383.5 307.0V321.5M384.5 310.3V315.3M385.5 311.1V318.4M386.5 306.8V318.1M387.5 309.9V314.1M388.5 310.1V315.0M389.5 307.7V314.7M390.5 305.7V315.4M391.5 306.2V312.9M392.5 305.2V311.9M393.5 302.9V312.2M394.5 300.4V308.5M395.5 301.3V306.8M396.5 296.0V304.9M397.5 290.7V304.6M398.5 291.8V301.9M399.5 291.5V297.1M400.5 285.5V298.6M401.5 289.8V294.1M402.5 288.7V296.0M403.5 289.1V295.7M404.5 287.2V297.2M405.5 283.0V292.2M406.5 274.5V300.0M407.5 267.3V303.9M408.5 261.6V296.7M409.5 256.9V280.0M410.5 260.5V265.9M411.5 249.7V271.5M412.5 240.2V263.3M413.5 235.9V253.7M414.5 242.9V250.8M415.5 243.4V248.9M416.5 234.0V258.0M417.5 236.6V250.8M418.5 236.2V248.8M419.5 239.9V247.6M420.5 234.7V248.8M421.5 237.0V242.9M422.5 232.5V238.2M423.5 232.4V238.5M424.5 219.1V239.2M425.5 210.0V238.0M426.5 213.0V231.9M427.5 210.0V238.0M428.5 212.6V237.5M429.5 218.4V235.4M430.5 223.2V235.5M431.5 225.5V234.9M432.5 226.3V233.1M433.5 226.4V231.3M434.5 226.2V230.9M435.5 223.0V233.8M436.5 223.2V233.7M437.5 225.7V232.3M438.5 225.3V233.7M439.5 223.2V233.1M440.5 222.2V227.7M441.5 219.8V224.7M442.5 207.3V229.6M443.5 206.4V229.0M444.5 217.2V221.3M445.5 218.2V228.5M446.5 216.3V229.0M447.5 215.4V227.7M448.5 211.6V224.8M449.5 204.9V222.3M450.5 202.0V220.7M451.5 208.5V218.9M452.5 207.9V212.1M453.5 204.9V213.9M454.5 199.3V218.2M455.5 209.6V214.4M456.5 213.9V224.2M457.5 213.3V231.2M458.5 211.3V234.8M459.5 215.1V224.3M460.5 192.7V238.9M461.5 187.1V235.0M462.5 194.7V224.3M463.5 195.9V210.4M464.5 181.7V206.4M465.5 189.4V194.6M466.5 182.8V191.8M467.5 177.2V197.5M468.5 176.6V196.7M469.5 184.5V190.7M470.5 186.0V192.4M471.5 177.8V201.5M472.5 183.3V203.6M473.5 192.8V201.9M474.5 189.1V211.4M475.5 191.0V211.9M476.5 198.1V209.6M477.5 196.9V201.2M478.5 190.0V205.4M479.5 181.1V198.8M480.5 169.8V204.1M481.5 191.7V202.7M482.5 187.5V227.2M483.5 198.5V234.6M484.5 220.2V225.8M485.5 219.9V238.3M486.5 230.1V234.8M487.5 233.5V240.4M488.5 228.7V248.7M489.5 234.6V241.6M490.5 232.7V246.6M491.5 230.6V243.3M492.5 229.5V233.7M493.5 219.9V233.9M494.5 226.8V234.2M495.5 227.4V236.1M496.5 229.7V232.9M497.5 226.1V238.7M498.5 229.7V238.8M499.5 232.1V236.9M500.5 227.9V241.2M501.5 224.3V233.5M502.5 225.0V230.5M503.5 211.8V236.6M504.5 213.9V234.1M505.5 221.3V231.9M506.5 214.8V232.2M507.5 222.0V292.0M508.5 291.0V314.6M509.5 292.8V312.8M510.5 292.4V315.8M511.5 306.1V327.9M512.5 313.0V334.0M513.5 313.0V334.0M514.5 307.7V334.0M515.5 303.8V335.2M516.5 304.5V323.5M517.5 299.0V340.5M518.5 299.0V345.5M519.5 323.5V365.4M520.5 348.0V382.7M521.5 363.8V390.5M522.5 380.6V401.9M523.5 382.7V409.0M524.5 380.9V403.0M525.5 382.5V403.2M526.5 389.7V403.4M527.5 391.8V415.2M528.5 398.7V407.6M529.5 396.0V407.2M530.5 387.2V403.4M531.5 391.7V398.4M532.5 395.2V400.4M533.5 391.7V403.0M534.5 395.8V399.4M535.5 392.5V401.4M536.5 392.8V403.0M537.5 393.6V413.8M538.5 394.7V435.5M539.5 419.0V454.4M540.5 442.0V473.4M541.5 453.8V471.7M542.5 453.9V460.9M543.5 442.0V473.4M544.5 444.6V459.1M545.5 446.8V456.1M546.5 437.2V464.3M547.5 441.0V453.5M548.5 421.2V453.7M549.5 414.2V447.2M550.5 408.8V439.6M551.5 406.0V435.8M552.5 417.4V429.5M553.5 417.4V435.1M554.5 412.4V425.6M555.5 406.0V435.8M556.5 405.4V435.0M557.5 414.8V427.7M558.5 403.4V421.9M559.5 401.6V430.3M560.5 401.0V429.5M561.5 401.0V429.5M562.5 414.0V425.9M563.5 416.8V439.9M564.5 433.2V441.5M565.5 421.6V471.8M566.5 437.9V451.1M567.5 415.0V446.6M568.5 411.1V462.7M569.5 430.9V443.7M570.5 422.2V442.8M571.5 410.7V462.4M572.5 430.0V464.3M573.5 442.0V465.5M574.5 445.9V465.3M575.5 446.8V460.2M576.5 451.3V458.2M577.5 442.0V465.5M578.5 441.5V466.0M579.5 446.1V458.4M580.5 439.5V468.2M581.5 439.0V468.7M582.5 439.0V468.7M583.5 440.8V491.5M584.5 453.9V510.0M585.5 487.2V505.5M586.5 501.6V526.9M587.5 495.4V512.9M588.5 494.0V520.5M589.5 512.5V533.2M590.5 530.7V540.0M591.5 529.0V553.6M592.5 528.9V551.5M593.5 528.6V547.3M594.5 534.1V541.7M595.5 531.2V548.9M596.5 529.8V548.3M597.5 532.8V542.0M598.5 521.0V543.3M599.5 517.3V535.3M600.5 512.8V541.9M601.5 510.2V527.0M602.5 493.6V522.2M603.5 485.6V515.7M604.5 480.2V500.4M605.5 474.8V512.3M606.5 478.7V515.2M607.5 482.0V515.9M608.5 496.1V506.5M609.5 487.2V512.8M610.5 488.5V512.0M611.5 488.5V512.0M612.5 492.1V506.3M613.5 487.3V526.7M614.5 487.0V530.8M615.5 487.0V530.8M616.5 498.7V513.0M617.5 476.4V515.9M618.5 473.6V512.0M619.5 488.8V498.5M620.5 475.4V512.0M621.5 484.1V512.0M622.5 488.5V512.0M623.5 497.7V503.3M624.5 488.5V512.0M625.5 487.9V510.3M626.5 491.3V503.6M627.5 485.3V503.8M628.5 489.3V494.9M629.5 482.3V499.9M630.5 483.9V495.8M631.5 488.9V493.4M632.5 488.1V495.9M633.5 482.0V499.5M634.5 487.0V490.5M635.5 484.1V489.9M636.5 475.1V492.4M637.5 473.6V488.2M638.5 477.0V483.6M639.5 466.5V486.4M640.5 465.0V485.4M641.5 472.9V478.4M642.5 470.6V482.9M643.5 471.2V485.1M644.5 465.0V485.4M645.5 465.2V476.1M646.5 451.5V483.4M647.5 460.8V477.6M648.5 467.7V477.0M649.5 465.2V491.3M650.5 466.4V505.1M651.5 466.3V512.0M652.5 465.0V512.0M653.5 483.7V519.9M654.5 493.0V523.8M655.5 493.0V523.8M656.5 440.6V491.1M657.5 433.8V481.8M658.5 441.8V468.7M659.5 433.8V481.8M660.5 451.5V465.6M661.5 439.5V465.7M662.5 434.4V472.4M663.5 438.1V473.2M664.5 445.4V478.0M665.5 449.0V480.4M666.5 453.0V470.2M667.5 449.0V480.4M668.5 456.6V465.4M669.5 456.1V469.6M670.5 449.0V464.6M671.5 451.4V461.0M672.5 454.9V460.2M673.5 449.5V464.0M674.5 454.9V458.2M675.5 452.8V458.1M676.5 451.4V458.0M677.5 448.9V463.8M678.5 452.7V456.6M679.5 446.0V460.0M680.5 447.0V458.1M681.5 446.0V460.0M682.5 443.0V457.8M683.5 443.7V446.9M684.5 431.6V449.6M685.5 435.6V445.1M686.5 423.5V445.8M687.5 419.3V441.4M688.5 417.7V427.0M689.5 410.3V427.7M690.5 415.6V422.2M691.5 415.2V423.5M692.5 415.0V421.2M693.5 409.0V425.6M694.5 409.1V423.0M695.5 406.6V425.9M696.5 401.6V419.8M697.5 392.6V408.3M698.5 381.9V399.7M699.5 380.5V389.4M700.5 376.6V392.4M701.5 373.8V392.9M702.5 369.9V392.2M703.5 375.4V379.9M704.5 364.5V382.6M705.5 362.7V374.8M706.5 366.0V372.7M707.5 358.8V384.8M708.5 372.4V405.9M709.5 398.2V425.9M710.5 402.8V436.0M711.5 411.8V447.0M712.5 424.1V457.4M713.5 426.7V448.2M714.5 425.6V449.0M715.5 424.6V440.0M716.5 421.0V429.7M717.5 412.6V432.8M718.5 417.8V427.1M719.5 417.5V435.8M720.5 418.7V437.6M721.5 418.7V439.9M722.5 421.8V441.2M723.5 427.9V441.8M724.5 429.3V439.8M725.5 427.3V434.0M726.5 422.5V431.0M727.5 422.7V428.5M728.5 422.7V428.5M729.5 422.7V428.5M730.5 422.0V429.7M731.5 422.7V428.5M732.5 422.7V433.0M733.5 428.5V449.7M734.5 432.1V445.8M735.5 429.7V453.0M736.5 436.0V452.1M737.5 437.7V455.4M738.5 439.7V449.2M739.5 443.1V452.3M740.5 439.0V455.8M741.5 446.9V465.1M742.5 457.5V461.3M743.5 450.0V468.8M744.5 448.4V466.2M745.5 445.0V461.1M746.5 442.2V459.2M747.5 446.0V452.3M748.5 437.2V462.2M749.5 442.5V454.8M750.5 422.6V444.4M751.5 413.9V457.0M752.5 420.3V444.1M753.5 430.7V436.3M754.5 431.6V443.8M755.5 436.0V456.3M756.5 440.3V454.7M757.5 436.5V457.0M758.5 441.6V447.5M759.5 429.8V452.1M760.5 429.0V451.6M761.5 433.1V447.5" stroke="#00ff00" stroke-width="1" shape-rendering="crispEdges" fill="none"/>
<path d="M230.0 161.0L238.6 159.0L248.0 156.4L256.4 157.8L270.0 157.0L275.6 149.0L283.9 142.0L294.8 144.8L299.0 157.0L303.5 163.5L313.0 180.7L320.7 198.0L325.5 213.7L334.9 226.0L342.3 245.4L350.2 264.2L362.7 284.6L370.5 300.2L378.4 314.3L387.8 319.0L400.3 315.0L409.7 305.0L419.0 294.0L425.4 278.3L433.2 258.0L441.0 245.4L445.5 240.0L456.4 229.7L469.0 219.6L475.2 210.0L481.5 203.0L487.8 200.0L494.0 207.0L500.3 218.0L506.6 223.5L514.4 226.6L516.8 236.0L519.8 247.0L522.0 264.5L526.8 283.3L530.0 299.0L531.5 314.6L533.0 320.0L536.0 335.7L539.2 351.3L545.5 367.0L548.6 382.7L550.6 398.0L553.7 410.7L560.0 420.0L570.0 420.9L578.0 428.7L585.8 440.5L593.7 453.0L596.8 465.0L599.2 474.4L601.5 488.5L604.7 498.0L610.0 504.0L622.7 503.4L630.5 498.7L641.5 495.6L650.9 488.5L660.3 482.0L663.7 473.6L674.7 469.5L684.3 462.6L691.0 457.0L696.6 449.0L702.0 439.0L706.2 428.0L710.4 413.0L714.5 403.0L717.2 400.0L721.3 409.9L726.8 415.4L733.7 422.0L740.5 423.6L746.0 429.0L751.5 436.0L758.4 441.0L763.9 440.0" stroke="#0000ff" stroke-width="1" fill="none" stroke-linejoin="round" shape-rendering="crispEdges" stroke-dasharray="3 3"/>
<path d="M230.4 157.8L240.0 158.0L255.0 160.0L262.0 158.0L270.0 147.5L275.6 142.0L286.6 142.0L290.7 147.5L294.8 160.0L299.0 169.5L304.4 176.0L308.2 182.3L311.3 198.0L316.0 205.8L320.7 218.4L325.5 230.0L329.8 231.3L336.0 247.0L342.3 267.3L347.0 279.9L353.3 287.7L359.6 292.4L364.3 298.7L367.4 311.2L372.0 320.6L380.0 322.0L387.8 319.0L397.2 314.3L406.6 301.8L414.4 287.7L420.7 272.0L423.8 262.6L428.0 252.5L433.0 241.5L439.0 235.0L445.5 231.0L453.3 224.0L459.6 218.0L467.4 211.7L475.2 200.8L480.0 196.8L487.0 197.6L490.0 210.0L492.5 221.0L500.3 224.3L506.6 225.8L511.3 229.0L512.9 241.5L515.9 261.0L518.0 277.0L520.6 289.6L523.7 299.0L526.0 314.6L526.6 324.7L529.8 343.5L533.0 360.8L535.3 373.3L540.8 384.3L543.9 393.7L544.3 397.0L546.6 410.7L549.0 426.3L553.7 435.8L559.2 430.0L567.0 424.0L574.9 432.6L582.7 446.7L589.7 457.7L592.0 468.0L594.5 480.7L596.8 493.0L598.4 505.8L601.5 516.7L608.6 512.0L614.9 505.0L622.7 502.6L629.0 496.3L638.4 494.0L644.6 490.0L647.8 482.0L650.0 481.0L656.4 479.6L664.2 471.8L670.5 465.5L678.3 460.8L685.0 452.0L693.9 438.7L698.0 429.0L702.0 419.5L705.6 408.5L708.3 400.0L710.4 392.0L713.8 390.7L717.2 400.0L718.6 411.0L722.7 415.4L726.8 419.5L735.0 425.6L740.5 430.4L746.0 436.6L755.0 438.0L762.0 437.0" stroke="#ff0000" stroke-width="1" fill="none" stroke-linejoin="round" shape-rendering="crispEdges" stroke-dasharray="3 3"/>
<path d="M230.0 151.6L234.5 157.0L242.7 155.7L253.7 159.0L259.0 162.6L264.7 157.0L270.0 144.8L275.6 139.0L283.9 139.0L289.4 146.0L290.7 157.0L293.5 168.0L296.0 176.0L300.4 178.4L305.0 184.0L307.4 194.9L309.0 202.7L313.7 209.0L316.8 218.4L318.4 226.2L322.3 235.6L332.9 247.0L336.0 265.8L339.2 273.6L344.7 284.6L347.0 294.0L353.3 290.8L361.0 300.2L364.3 316.0L368.0 326.0L375.0 330.0L384.6 317.5L390.9 314.3L400.3 305.0L408.2 298.7L412.9 286.0L416.8 270.5L419.0 258.0L420.4 254.0L425.0 244.6L431.3 230.5L443.9 229.0L448.6 222.7L454.9 214.9L459.6 211.0L467.4 207.0L470.5 196.8L475.2 193.0L481.5 197.6L484.6 194.5L487.0 207.0L490.0 219.6L494.0 229.0L501.9 229.0L508.0 232.0L510.5 244.6L512.7 261.0L514.3 280.0L515.9 295.8L520.6 306.8L522.0 317.8L522.7 321.6L524.3 338.8L526.6 356.0L529.0 370.0L531.3 385.8L536.0 392.0L540.4 396.6L543.5 410.7L545.0 429.5L547.4 445.0L551.3 449.0L553.7 440.5L558.4 429.5L563.9 423.0L568.6 431.0L574.9 439.0L582.7 457.7L587.4 456.0L589.0 473.4L589.8 480.7L592.0 491.6L593.7 504.0L596.0 516.7L597.6 524.6L603.9 526.0L606.2 518.3L609.4 510.5L613.0 504.0L618.0 505.8L621.9 496.3L629.0 494.8L638.4 491.6L643.0 485.4L647.8 474.4L650.0 468.7L653.0 473.4L656.4 484.0L661.0 473.4L664.2 459.0L670.5 464.0L678.3 457.7L685.0 447.0L691.0 436.0L695.3 423.6L700.0 411.0L704.2 399.0L707.0 390.7L709.0 381.0L711.7 383.8L713.0 394.8L715.0 405.8L717.2 415.4L721.3 420.8L726.8 426.3L735.0 429.0L740.5 434.6L746.0 436.0L758.4 434.6" stroke="#ffff00" stroke-width="1" fill="none" stroke-linejoin="round" shape-rendering="crispEdges" stroke-dasharray="3 3"/>
<path d="M230.0 146.0L242.7 150.3L256.4 153.7L270.0 150.3L279.8 146.8L286.6 148.2L295.0 154.5L305.8 166.7L311.3 173.7L325.5 194.0L334.9 215.0L341.5 225.0L347.0 234.4L359.6 254.8L369.0 273.6L378.4 285.3L390.9 294.0L398.7 296.3L408.2 295.5L416.0 287.7L425.4 275.2L437.9 261.0L442.3 257.0L453.3 245.4L462.7 240.0L472.0 229.0L482.3 220.0L487.8 222.0L497.2 224.3L506.6 227.4L509.7 233.7L514.4 244.6L518.2 250.8L522.9 266.0L527.6 283.3L534.7 305.0L540.0 320.0L545.5 338.8L551.7 356.0L562.7 373.3L572.0 389.0L575.6 395.0L584.3 409.0L590.5 426.3L598.4 449.9L607.8 462.4L618.7 471.8L629.7 478.9L639.0 480.4L648.5 478.9L658.2 477.7L667.8 473.6L681.5 467.4L691.2 457.0L698.0 447.5L703.5 436.5L709.0 430.4L721.3 429.4L732.3 430.0L740.5 434.5L748.8 436.8L759.7 436.8" stroke="#ff0000" stroke-width="1" fill="none" stroke-linejoin="round" shape-rendering="crispEdges"/>
<path d="M230.0 130.4L263.0 140.0L295.0 144.7L305.8 150.3L318.0 164.0L330.5 175.0L342.7 191.7L358.4 212.0L365.8 225.0L378.4 240.7L390.9 250.9L406.6 260.3L416.0 260.3L425.0 257.0L439.2 251.7L451.7 247.0L462.7 242.3L473.7 235.2L483.0 231.3L485.4 232.4L508.0 232.4L510.4 236.3L519.8 247.2L534.7 274.7L541.7 288.0L548.0 300.5L555.8 314.6L559.6 320.0L565.2 327.0L570.5 335.7L583.0 353.0L590.9 368.6L600.3 387.4L605.4 395.0L614.0 407.5L629.7 424.8L645.4 434.2L650.0 437.2L655.5 441.3L667.8 444.0L678.8 445.0L689.8 443.4L698.0 440.0L704.9 434.5L707.6 431.7L715.8 430.8L735.0 430.8L743.3 433.8L750.0 434.5L759.7 434.0" stroke="#ffff00" stroke-width="1" fill="none" stroke-linejoin="round" shape-rendering="crispEdges"/>
<path d="M230 451.5H982" stroke="#7b90a8" stroke-width="1" shape-rendering="crispEdges"/>
<path d="M229.5 568.5V87.5H982.5V568.5H229.5" stroke="#fff" fill="none" shape-rendering="crispEdges"/>
<path d="M983 102.5h2" stroke="#fff" shape-rendering="crispEdges"/>
<text x="988.4" y="106.0" font-size="10" fill="#fff" textLength="27.2" lengthAdjust="spacing">1.6585</text>
<path d="M983 135.5h2" stroke="#fff" shape-rendering="crispEdges"/>
<text x="988.4" y="139.0" font-size="10" fill="#fff" textLength="27.2" lengthAdjust="spacing">1.6525</text>
<path d="M983 168.5h2" stroke="#fff" shape-rendering="crispEdges"/>
<text x="988.4" y="172.0" font-size="10" fill="#fff" textLength="27.2" lengthAdjust="spacing">1.6465</text>
<path d="M983 201.5h2" stroke="#fff" shape-rendering="crispEdges"/>
<text x="988.4" y="205.0" font-size="10" fill="#fff" textLength="27.2" lengthAdjust="spacing">1.6405</text>
<path d="M983 234.5h2" stroke="#fff" shape-rendering="crispEdges"/>
<text x="988.4" y="238.0" font-size="10" fill="#fff" textLength="27.2" lengthAdjust="spacing">1.6345</text>
<path d="M983 267.5h2" stroke="#fff" shape-rendering="crispEdges"/>
<text x="988.4" y="271.0" font-size="10" fill="#fff" textLength="27.2" lengthAdjust="spacing">1.6285</text>
<path d="M983 300.5h2" stroke="#fff" shape-rendering="crispEdges"/>
<text x="988.4" y="304.0" font-size="10" fill="#fff" textLength="27.2" lengthAdjust="spacing">1.6225</text>
<path d="M983 333.5h2" stroke="#fff" shape-rendering="crispEdges"/>
<text x="988.4" y="337.0" font-size="10" fill="#fff" textLength="27.2" lengthAdjust="spacing">1.6165</text>
<path d="M983 366.5h2" stroke="#fff" shape-rendering="crispEdges"/>
<text x="988.4" y="370.0" font-size="10" fill="#fff" textLength="27.2" lengthAdjust="spacing">1.6105</text>
<path d="M983 400.5h2" stroke="#fff" shape-rendering="crispEdges"/>
<text x="988.4" y="404.0" font-size="10" fill="#fff" textLength="27.2" lengthAdjust="spacing">1.6045</text>
<path d="M983 433.5h2" stroke="#fff" shape-rendering="crispEdges"/>
<text x="988.4" y="437.0" font-size="10" fill="#fff" textLength="27.2" lengthAdjust="spacing">1.5985</text>
<path d="M983 466.5h2" stroke="#fff" shape-rendering="crispEdges"/>
<text x="988.4" y="470.0" font-size="10" fill="#fff" textLength="27.2" lengthAdjust="spacing">1.5925</text>
<path d="M983 499.5h2" stroke="#fff" shape-rendering="crispEdges"/>
<text x="988.4" y="503.0" font-size="10" fill="#fff" textLength="27.2" lengthAdjust="spacing">1.5865</text>
<path d="M983 532.5h2" stroke="#fff" shape-rendering="crispEdges"/>
<text x="988.4" y="536.0" font-size="10" fill="#fff" textLength="27.2" lengthAdjust="spacing">1.5805</text>
<path d="M983 565.5h2" stroke="#fff" shape-rendering="crispEdges"/>
<text x="988.4" y="569.0" font-size="10" fill="#fff" textLength="27.2" lengthAdjust="spacing">1.5745</text>
<rect x="985" y="445" width="34" height="11" fill="#fff"/>
<text x="988.4" y="454.0" font-size="10" fill="#000" textLength="27.2" lengthAdjust="spacing">1.5952</text>
<text x="229.1" y="581.0" font-size="10" fill="#fff" textLength="52.3" lengthAdjust="spacing">16 Sep 2009</text>
<path d="M230.5 569v3" stroke="#fff" shape-rendering="crispEdges"/>
<text x="293.1" y="581.0" font-size="10" fill="#fff" textLength="54.8" lengthAdjust="spacing">18 Sep 00:00</text>
<path d="M294.5 569v3" stroke="#fff" shape-rendering="crispEdges"/>
<text x="356.6" y="581.0" font-size="10" fill="#fff" textLength="54.8" lengthAdjust="spacing">21 Sep 08:00</text>
<path d="M357.5 569v3" stroke="#fff" shape-rendering="crispEdges"/>
<text x="421.1" y="581.0" font-size="10" fill="#fff" textLength="54.8" lengthAdjust="spacing">22 Sep 16:00</text>
<path d="M422.5 569v3" stroke="#fff" shape-rendering="crispEdges"/>
<text x="485.1" y="581.0" font-size="10" fill="#fff" textLength="54.8" lengthAdjust="spacing">24 Sep 00:00</text>
<path d="M486.5 569v3" stroke="#fff" shape-rendering="crispEdges"/>
<text x="548.1" y="581.0" font-size="10" fill="#fff" textLength="54.8" lengthAdjust="spacing">25 Sep 08:00</text>
<path d="M548.5 569v3" stroke="#fff" shape-rendering="crispEdges"/>
<text x="612.1" y="581.0" font-size="10" fill="#fff" textLength="54.8" lengthAdjust="spacing">28 Sep 16:00</text>
<path d="M612.5 569v3" stroke="#fff" shape-rendering="crispEdges"/>
<text x="676.1" y="581.0" font-size="10" fill="#fff" textLength="54.8" lengthAdjust="spacing">30 Sep 00:00</text>
<path d="M676.5 569v3" stroke="#fff" shape-rendering="crispEdges"/>
<text x="740.6" y="581.0" font-size="10" fill="#fff" textLength="48.8" lengthAdjust="spacing">1 Oct 08:00</text>
<path d="M741.5 569v3" stroke="#fff" shape-rendering="crispEdges"/>
<text x="233.6" y="99.5" font-size="10" fill="#fff" textLength="186.8" lengthAdjust="spacing" xml:space="preserve">GBPUSD,M30  1.5984 1.5991 1.5951 1.5952</text>
<text x="879.2" y="100.0" font-size="10" fill="#fff" textLength="84.4" lengthAdjust="spacing">GoldenProfit_AUTO</text>
<path d="M969.5 94.5l4 4M973.5 94.5l-4 4M968 96.5h7" stroke="#fff" stroke-width="1"/>
<path d="M750 88h9.500l-4.750 5z" fill="#7a8ca0"/>
<path d="M230 561l7 7h-7z" fill="#9aa"/>
<path d="M788 444.5H971" stroke="#8a8a8a" stroke-dasharray="2 1" shape-rendering="crispEdges"/>
<path d="M788 465.5H971" stroke="#8a8a8a" stroke-dasharray="2 1" shape-rendering="crispEdges"/>
<path d="M788 544.5H971" stroke="#8a8a8a" stroke-dasharray="2 1" shape-rendering="crispEdges"/>
<text x="929.6" y="440.3" font-size="8.5" fill="#5aabab" font-weight="bold" textLength="39.2" lengthAdjust="spacingAndGlyphs">GBPUSD</text>
<rect x="794.4" y="456.0" width="4" height="3.600" fill="#0a9a1a"/>
<rect x="800.3" y="456.0" width="4" height="3.600" fill="#0a9a1a"/>
<rect x="800.3" y="450.4" width="4" height="3.600" fill="#0a9a1a"/>
<rect x="805.0" y="450.4" width="4" height="3.600" fill="#a01010"/>
<rect x="805.0" y="456.0" width="4" height="3.600" fill="#a01010"/>
<rect x="811.0" y="456.0" width="4" height="3.600" fill="#a01010"/>
<text x="828.2" y="458.8" font-size="10" fill="#d8d8d8" textLength="56.8" lengthAdjust="spacing">Probability:</text>
<text x="895.2" y="458.8" font-size="10" fill="#d8d8d8" textLength="36.7" lengthAdjust="spacing">SHORT</text>
<text x="940.4" y="459.5" font-size="11" fill="#a00c0c" font-weight="bold" textLength="29.0" lengthAdjust="spacingAndGlyphs">45%</text>
<rect x="791" y="471.0" width="26" height="9" fill="#f01010"/>
<text x="797.6" y="479.0" font-size="9.5" fill="#500" textLength="12.8" lengthAdjust="spacingAndGlyphs">81</text>
<text x="912.0" y="479.0" font-size="10" fill="#d0d0d0" textLength="57.0" lengthAdjust="spacing">Multi-Info+</text>
<rect x="791" y="486.1" width="26" height="9" fill="#ff8c00"/>
<text x="801.1" y="494.1" font-size="9.5" fill="#400" textLength="5.8" lengthAdjust="spacing">3</text>
<text x="891.4" y="494.1" font-size="10" fill="#d0d0d0" textLength="77.6" lengthAdjust="spacing">Indice Strength</text>
<rect x="791" y="501.2" width="26" height="9" fill="#ff9c00"/>
<rect x="807" y="501.2" width="10" height="9" fill="#ffff20"/>
<text x="791.6" y="509.2" font-size="9.5" fill="#400" textLength="24.3" lengthAdjust="spacing" xml:space="preserve">4 - 6</text>
<text x="866.2" y="509.2" font-size="10" fill="#d0d0d0" textLength="102.8" lengthAdjust="spacing">Currency Pair Range</text>
<rect x="791" y="516.3" width="26" height="9" fill="#f01010"/>
<path d="M801.5 518.1l4.500 4.500M806.700 519.5v4h-4z" stroke="#000" stroke-width="1.300" fill="#000"/>
<text x="887.3" y="524.3" font-size="10" fill="#d0d0d0" textLength="81.7" lengthAdjust="spacing">MACD Indicator</text>
<rect x="791" y="531.4" width="26" height="9" fill="#f01010"/>
<path d="M801.5 533.2l4.500 4.500M806.700 534.6v4h-4z" stroke="#000" stroke-width="1.300" fill="#000"/>
<text x="866.2" y="539.4" font-size="10" fill="#d0d0d0" textLength="102.8" lengthAdjust="spacing">Stochastic Indicator</text>
<text x="862.6" y="553.6" font-size="8.5" fill="#6e6e6e" textLength="106.8" lengthAdjust="spacing" xml:space="preserve">»»»  Ultra Wizard 2008  «««</text>
</svg>
<div class="a" style="left:226px;top:586px;width:795px;height:1px;background:#fbf6e6"></div>
<div class="a" style="left:226px;top:587px;width:795px;height:21px;background:#e8dab2"></div>
<div class="a" style="left:0;top:607px;width:1021px;height:1px;background:#f6efda"></div><div class="a" style="left:0;top:608px;width:1021px;height:1px;background:#d2b566"></div>
<div class="a" style="left:226px;top:586px;width:1px;height:21px;background:#222"></div><div class="a" style="left:226px;top:606px;width:85px;height:1px;background:#555"></div>
<div class="a" style="left:310px;top:586px;width:84px;height:21px;background:#fff;border:1px solid #111;border-top:0;border-right-width:2px"></div>
<span class="t" style="left:238.70px;top:589.15px;font-size:11.7px;letter-spacing:-1.318px;">GBPUSD,M5</span>
<span class="t" style="left:318.10px;top:589.15px;font-size:11.7px;letter-spacing:-1.327px;">GBPUSD,M30</span>
<span class="t" style="left:403.90px;top:589.15px;font-size:11.7px;letter-spacing:-1.138px;">EURUSD,M30</span>
<span class="t" style="left:491.50px;top:589.15px;font-size:11.7px;letter-spacing:-1.161px;">NZDUSD,H4</span>
<span class="t" style="left:570.30px;top:589.15px;font-size:11.7px;letter-spacing:-1.105px;">AUDUSD,M5</span>
<span class="t" style="left:649.90px;top:589.15px;font-size:11.7px;letter-spacing:-0.984px;">NZDUSD,Daily</span>
<span class="t" style="left:737.50px;top:589.15px;font-size:11.7px;letter-spacing:-1.238px;">GBPUSD,M15</span>
<div class="a" style="left:481px;top:591px;width:1px;height:12px;background:#222"></div>
<div class="a" style="left:561px;top:591px;width:1px;height:12px;background:#222"></div>
<div class="a" style="left:641px;top:591px;width:1px;height:12px;background:#222"></div>
<div class="a" style="left:729px;top:591px;width:1px;height:12px;background:#222"></div>
<div class="a" style="left:813px;top:591px;width:1px;height:12px;background:#222"></div>
<div class="a" style="left:993px;top:594px;width:0;height:0;border-top:4px solid transparent;border-bottom:4px solid transparent;border-right:4px solid #9aa4b8"></div>
<div class="a" style="left:1010px;top:594px;width:0;height:0;border-top:4px solid transparent;border-bottom:4px solid transparent;border-left:4px solid #9aa4b8"></div>
<div class="a" style="left:0;top:609px;width:1021px;height:18px;background:#e8dab2"></div>
<svg class="a" style="left:3px;top:614px" width="9" height="9"><path d="M1.5 1.5l6 6M7.5 1.5l-6 6" stroke="#000" stroke-width="1.7"/></svg>
<div class="a" style="left:16px;top:611px;width:990px;height:16px;background:#eadcaf;border-top:1px solid #f8f2dc;border-left:1px solid #f8f2dc"></div>
<div class="a" style="left:121px;top:612px;width:1px;height:15px;background:#4a4026"></div><div class="a" style="left:122px;top:612px;width:1px;height:15px;background:#f8f2dc"></div>
<div class="a" style="left:301px;top:612px;width:1px;height:15px;background:#4a4026"></div><div class="a" style="left:302px;top:612px;width:1px;height:15px;background:#f8f2dc"></div>
<div class="a" style="left:375px;top:612px;width:1px;height:15px;background:#4a4026"></div><div class="a" style="left:376px;top:612px;width:1px;height:15px;background:#f8f2dc"></div>
<div class="a" style="left:430px;top:612px;width:1px;height:15px;background:#4a4026"></div><div class="a" style="left:431px;top:612px;width:1px;height:15px;background:#f8f2dc"></div>
<div class="a" style="left:504px;top:612px;width:1px;height:15px;background:#4a4026"></div><div class="a" style="left:505px;top:612px;width:1px;height:15px;background:#f8f2dc"></div>
<div class="a" style="left:584px;top:612px;width:1px;height:15px;background:#4a4026"></div><div class="a" style="left:585px;top:612px;width:1px;height:15px;background:#f8f2dc"></div>
<div class="a" style="left:666px;top:612px;width:1px;height:15px;background:#4a4026"></div><div class="a" style="left:667px;top:612px;width:1px;height:15px;background:#f8f2dc"></div>
<div class="a" style="left:748px;top:612px;width:1px;height:15px;background:#4a4026"></div><div class="a" style="left:749px;top:612px;width:1px;height:15px;background:#f8f2dc"></div>
<div class="a" style="left:828px;top:612px;width:1px;height:15px;background:#4a4026"></div><div class="a" style="left:829px;top:612px;width:1px;height:15px;background:#f8f2dc"></div>
<div class="a" style="left:909px;top:612px;width:1px;height:15px;background:#4a4026"></div><div class="a" style="left:910px;top:612px;width:1px;height:15px;background:#f8f2dc"></div>
<div class="a" style="left:1005px;top:612px;width:1px;height:15px;background:#4a4026"></div><div class="a" style="left:1006px;top:612px;width:1px;height:15px;background:#f8f2dc"></div>
<span class="t" style="left:21.80px;top:614.14px;font-size:12px;letter-spacing:-0.848px;">Ордер</span>
<svg class="a" style="left:65px;top:616px" width="9" height="8"><path d="M4.5 .5l4 7h-8z" fill="#f6f0dc" stroke="#bbb"/></svg>
<span class="t" style="left:262.80px;top:614.14px;font-size:12px;letter-spacing:-0.652px;">Время</span>
<span class="t" style="left:351.00px;top:614.14px;font-size:12px;letter-spacing:-0.258px;">Тип</span>
<span class="t" style="left:386.20px;top:614.14px;font-size:12px;letter-spacing:0.191px;">Объём</span>
<span class="t" style="left:460.50px;top:614.14px;font-size:12px;letter-spacing:-0.856px;">Символ</span>
<span class="t" style="left:553.90px;top:614.14px;font-size:12px;letter-spacing:-0.753px;">Цена</span>
<span class="t" style="left:637.00px;top:614.14px;font-size:12px;letter-spacing:0.053px;">S / L</span>
<span class="t" style="left:717.30px;top:614.14px;font-size:12px;letter-spacing:0.319px;">T / P</span>
<span class="t" style="left:797.50px;top:614.14px;font-size:12px;letter-spacing:-0.786px;">Цена</span>
<span class="t" style="left:879.10px;top:614.14px;font-size:12px;letter-spacing:-0.926px;">Своп</span>
<span class="t" style="left:954.70px;top:614.14px;font-size:12px;letter-spacing:-0.661px;">Прибыль</span>
<div class="a" style="left:1007px;top:613px;width:12px;height:12px;background:linear-gradient(90deg,#f6efdb,#e4d3a4);border:1px solid #fbf7ea;border-right-color:#3a3220;border-bottom-color:#3a3220"></div>
<div class="a" style="left:1009.5px;top:616px;width:0;height:0;border-left:3.5px solid transparent;border-right:3.5px solid transparent;border-bottom:4px solid #000"></div>
<div class="a" style="left:0;top:605px;width:224px;height:1px;background:#fbf6e6"></div><div class="a" style="left:0;top:606px;width:226px;height:1px;background:#d2b566"></div>
<div class="a" style="left:223px;top:84px;width:1px;height:521px;background:#fbf6e6"></div><div class="a" style="left:225px;top:84px;width:1px;height:522px;background:#d8c080"></div>
<div class="a" style="left:0;top:82px;width:1021px;height:1px;background:#ecd9a0"></div><div class="a" style="left:0;top:83px;width:1021px;height:1px;background:#cfac52"></div>
</body></html>
